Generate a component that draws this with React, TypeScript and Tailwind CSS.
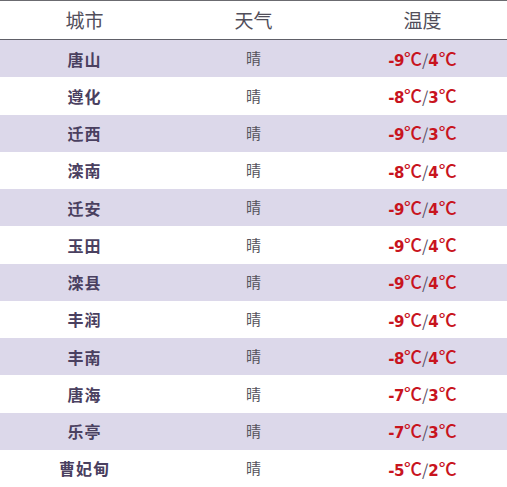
const rows: [string, string, string][] = [
  ['唐山', '-9', '4'],
  ['遵化', '-8', '3'],
  ['迁西', '-9', '3'],
  ['滦南', '-8', '4'],
  ['迁安', '-9', '4'],
  ['玉田', '-9', '4'],
  ['滦县', '-9', '4'],
  ['丰润', '-9', '4'],
  ['丰南', '-8', '4'],
  ['唐海', '-7', '3'],
  ['乐亭', '-7', '3'],
  ['曹妃甸', '-5', '2'],
]

export default function App() {
  return (
    <div className="w-[507px] h-[487px] bg-white overflow-hidden font-['Noto_Sans_CJK_SC',sans-serif]">
      {/* Header */}
      <div className="grid grid-cols-3 h-[40px] border-t border-b border-t-[#6b6b70] border-b-[#606068] items-center text-[19px] text-[#514e5a]">
        <div className="text-center">城市</div>
        <div className="text-center">天气</div>
        <div className="text-center">温度</div>
      </div>

      {rows.map(([city, low, high], i) => (
        <div
          key={city}
          className={`grid grid-cols-3 h-[37.25px] items-center ${i % 2 === 0 ? 'bg-[#dcd8ea]' : 'bg-white'}`}
        >
          <div className="text-center text-[16px] font-bold text-[#4a4060] tracking-[1px]">{city}</div>
          <div className="text-center text-[15px] text-[#55535c]">晴</div>
          <div className="flex justify-center items-baseline text-[15px] font-bold text-[#c8141e] font-['DejaVu_Sans','Noto_Sans_CJK_SC',sans-serif]">
            <span className="tracking-[-0.5px]">{low}</span>
            <span className="font-['Noto_Sans_CJK_SC',sans-serif] font-medium text-[18px]">℃</span>
            <span className="text-[#5a5068] font-normal text-[16px] font-['Noto_Sans_CJK_SC',sans-serif]">/</span>
            <span>{high}</span>
            <span className="font-['Noto_Sans_CJK_SC',sans-serif] font-medium text-[18px]">℃</span>
          </div>
        </div>
      ))}
    </div>
  )
}
